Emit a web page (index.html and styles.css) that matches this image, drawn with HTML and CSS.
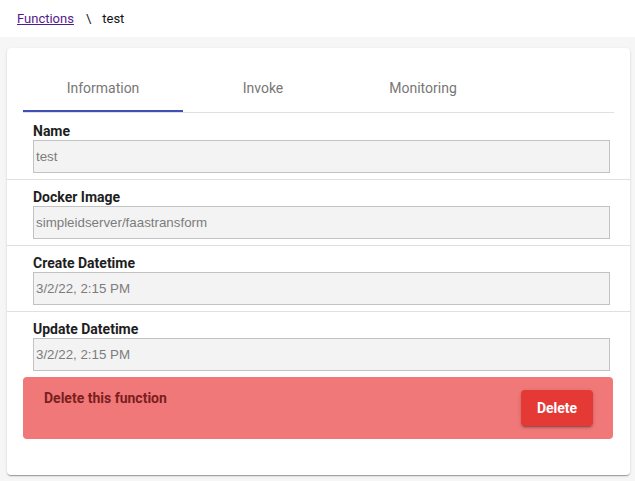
FILE: index.html
```html
<!DOCTYPE html>
<html lang="en">
<head>
<meta charset="utf-8">
<title>Functions - test</title>
<link rel="stylesheet" href="styles.css">
</head>
<body>
<header class="crumbs">
  <a href="#" class="crumb-link">Functions</a>
  <span class="crumb-sep">\</span>
  <span class="crumb-current">test</span>
</header>
<main class="page">
  <section class="card">
    <nav class="tabs">
      <div class="tab tab-active">Information</div>
      <div class="tab">Invoke</div>
      <div class="tab">Monitoring</div>
    </nav>
    <ul class="fields">
      <li class="field">
        <label class="field-label">Name</label>
        <input class="field-input" type="text" value="test" readonly>
      </li>
      <li class="field">
        <label class="field-label">Docker Image</label>
        <input class="field-input" type="text" value="simpleidserver/faastransform" readonly>
      </li>
      <li class="field">
        <label class="field-label">Create Datetime</label>
        <input class="field-input" type="text" value="3/2/22, 2:15 PM" readonly>
      </li>
      <li class="field">
        <label class="field-label">Update Datetime</label>
        <input class="field-input" type="text" value="3/2/22, 2:15 PM" readonly>
      </li>
    </ul>
    <div class="danger">
      <div class="danger-title">Delete this function</div>
      <button class="danger-btn" type="button">Delete</button>
    </div>
  </section>
</main>
</body>
</html>
```

FILE: styles.css
```css
* { box-sizing: border-box; }

html, body {
  margin: 0;
  padding: 0;
}

body {
  background: #f6f6f6;
  font-family: Roboto, "Liberation Sans", Arial, sans-serif;
  min-height: 481px;
}

.crumbs {
  height: 37px;
  background: #ffffff;
  display: flex;
  align-items: center;
  padding-left: 17px;
  font-size: 13px;
}

.crumb-link {
  color: #551a8b;
  text-decoration: underline;
}

.crumb-sep {
  color: #222;
  margin: 0 11px 0 12px;
}

.crumb-current {
  color: #111;
}

.page {
  padding: 11px 5px 0 7px;
}

.card {
  background: #ffffff;
  border-radius: 4px;
  box-shadow: 0 2px 1px -1px rgba(0,0,0,0.2), 0 1px 1px 0 rgba(0,0,0,0.14), 0 1px 3px 0 rgba(0,0,0,0.12);
  padding: 16px 16px 36px;
}

.tabs {
  display: flex;
  height: 49px;
  border-bottom: 1px solid #e0e0e0;
}

.tab {
  width: 160px;
  height: 48px;
  display: flex;
  align-items: center;
  justify-content: center;
  font-size: 14px;
  color: #777777;
}

.tab-active {
  box-shadow: inset 0 -2px 0 #3f51b5;
}

.fields {
  list-style: none;
  margin: 0 -16px;
  padding: 1px 0 0;
}

.field {
  display: flex;
  flex-direction: column;
  padding: 8px 20px 6px 26px;
  border-bottom: 1px solid #e0e0e0;
}

.field:last-child {
  border-bottom: none;
}

.field-label {
  font-size: 14px;
  font-weight: 700;
  line-height: 18px;
  color: #1e1e1e;
}

.field-input {
  height: 33px;
  width: 100%;
  margin: 0;
  padding: 0 2px;
  border: 1px solid #c2c2c2;
  border-radius: 0;
  background: #f3f3f3;
  color: #7c7c7c;
  font-family: "Liberation Sans", Arial, sans-serif;
  font-size: 13.333px;
  outline: none;
}

.danger {
  display: flex;
  justify-content: space-between;
  align-items: flex-start;
  background: #f07878;
  border-radius: 4px;
  margin-right: 1px;
  padding: 13px 20px 13px 21px;
}

.danger-title {
  font-size: 14px;
  font-weight: 700;
  line-height: 16px;
  color: #7a1e1e;
}

.danger-btn {
  width: 72px;
  height: 36px;
  border: none;
  border-radius: 4px;
  background: #e53935;
  color: #ffffff;
  font-family: Roboto, "Liberation Sans", Arial, sans-serif;
  font-size: 14px;
  font-weight: 700;
  box-shadow: 0 3px 1px -2px rgba(0,0,0,0.2), 0 2px 2px 0 rgba(0,0,0,0.14), 0 1px 5px 0 rgba(0,0,0,0.12);
  cursor: pointer;
}
```
